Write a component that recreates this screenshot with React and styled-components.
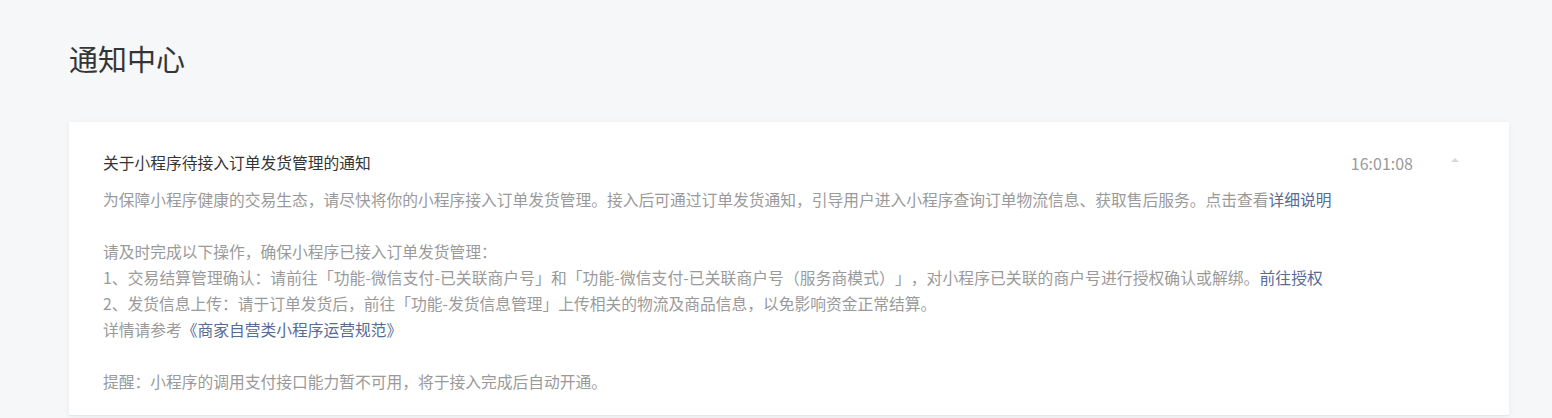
import React from "react";
import styled, { createGlobalStyle } from "styled-components";

const GlobalStyle = createGlobalStyle`
  html, body {
    margin: 0;
    padding: 0;
    background: #f6f7f9;
  }
  body {
    font-family: "Noto Sans CJK SC", "Noto Sans", sans-serif;
    color: #353535;
    text-spacing-trim: space-all;
  }
`;

const Page = styled.div`
  padding: 36px 43px 0 69px;
  height: 418px;
  box-sizing: border-box;
  overflow: hidden;
`;

const PageTitle = styled.h1`
  margin: 0;
  font-size: 29px;
  font-weight: 400;
  line-height: 44px;
  color: #353535;
`;

const Card = styled.div`
  margin-top: 42px;
  background: #ffffff;
  box-shadow: 0 1px 6px rgba(0, 0, 0, 0.06);
  border-bottom: 1px solid #e4e6ea;
  padding: 28px 50px 20px 34px;
`;

const CardHead = styled.div`
  display: flex;
  align-items: center;
`;

const NoticeTitle = styled.div`
  flex: 1;
  font-size: 15.75px;
  line-height: 26px;
  color: #353535;
`;

const Time = styled.div`
  font-size: 16px;
  color: #9a9a9a;
  margin-right: 38px;
`;

const Caret = styled.span`
  width: 0;
  height: 0;
  border-left: 4px solid transparent;
  border-right: 4px solid transparent;
  border-bottom: 4px solid #d8d8d8;
  margin-top: -6px;
`;

const Body = styled.div`
  margin-top: 11px;
  font-size: 15.75px;
  line-height: 26px;
  color: #9a9a9a;
`;

const Para = styled.p`
  margin: 0 0 ${(p) => (p.$gap ? "26px" : "0")};
  letter-spacing: ${(p) => (p.$loose ? "0.1px" : "0")};
`;

const Link = styled.a`
  color: #576b95;
  text-decoration: none;
  cursor: pointer;
`;

export default function App() {
  return (
    <>
      <GlobalStyle />
      <Page>
        <PageTitle>通知中心</PageTitle>
        <Card>
          <CardHead>
            <NoticeTitle>关于小程序待接入订单发货管理的通知</NoticeTitle>
            <Time>16:01:08</Time>
            <Caret />
          </CardHead>
          <Body>
            <Para $gap>
              为保障小程序健康的交易生态，请尽快将你的小程序接入订单发货管理。接入后可通过订单发货通知，引导用户进入小程序查询订单物流信息、获取售后服务。点击查看
              <Link>详细说明</Link>
            </Para>
            <Para>请及时完成以下操作，确保小程序已接入订单发货管理：</Para>
            <Para $loose>
              1、交易结算管理确认：请前往「功能-微信支付-已关联商户号」和「功能-微信支付-已关联商户号（服务商模式）」，对小程序已关联的商户号进行授权确认或解绑。
              <Link>前往授权</Link>
            </Para>
            <Para>
              2、发货信息上传：请于订单发货后，前往「功能-发货信息管理」上传相关的物流及商品信息，以免影响资金正常结算。
            </Para>
            <Para $gap>
              详情请参考<Link>《商家自营类小程序运营规范》</Link>
            </Para>
            <Para>提醒：小程序的调用支付接口能力暂不可用，将于接入完成后自动开通。</Para>
          </Body>
        </Card>
      </Page>
    </>
  );
}
